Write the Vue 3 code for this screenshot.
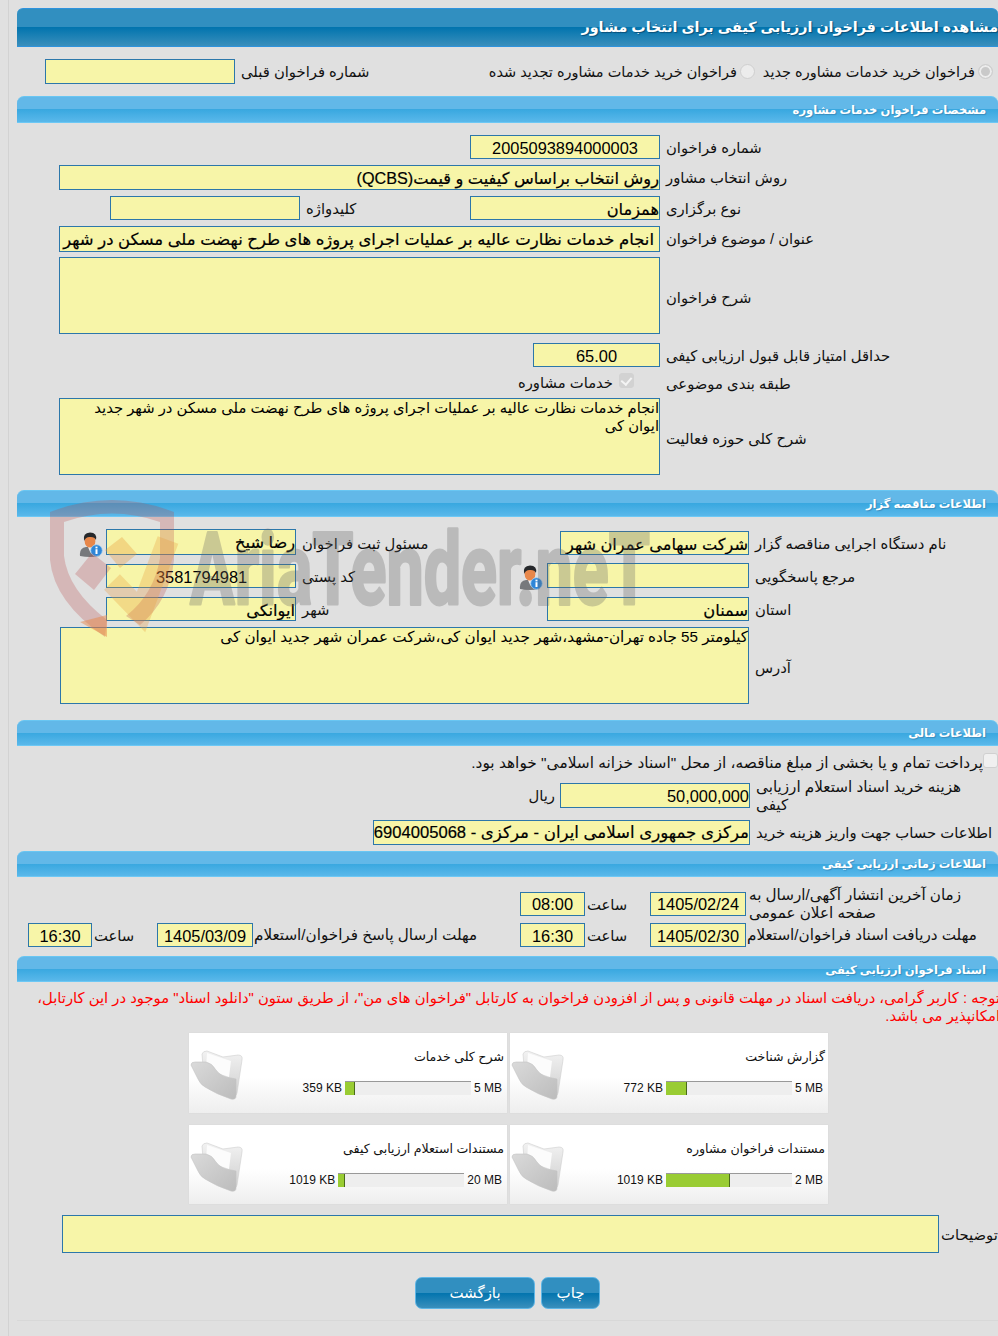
<script setup>
const cards = [
  { title: 'گزارش شناخت', max: '5 MB', used: '772 KB', pct: 17 },
  { title: 'شرح کلی خدمات', max: '5 MB', used: '359 KB', pct: 8 },
  { title: 'مستندات فراخوان مشاوره', max: '2 MB', used: '1019 KB', pct: 51 },
  { title: 'مستندات استعلام ارزیابی کیفی', max: '20 MB', used: '1019 KB', pct: 5 }
]
</script>

<template>
  <div class="page" dir="rtl">
    <h1 class="main-head">مشاهده اطلاعات فراخوان ارزیابی کیفی برای انتخاب مشاور</h1>

    <div class="row top-row">
      <label class="radio-item"><input type="radio" class="radio on" checked disabled />فراخوان خرید خدمات مشاوره جدید</label>
      <label class="radio-item second"><input type="radio" class="radio" disabled />فراخوان خرید خدمات مشاوره تجدید شده</label>
      <span class="lbl grow">شماره فراخوان قبلی</span>
      <div class="field w190"></div>
    </div>

    <h2 class="sec-head s2">مشخصات فراخوان خدمات مشاوره</h2>

    <div class="row h24 mt12">
      <span class="lbl l1">شماره فراخوان</span>
      <div class="field w190 num center">2005093894000003</div>
    </div>
    <div class="row h25 mt6">
      <span class="lbl l1">روش انتخاب مشاور</span>
      <div class="field w601 val">روش انتخاب براساس کیفیت و قیمت(QCBS)</div>
    </div>
    <div class="row h24 mt6">
      <span class="lbl l1">نوع برگزاری</span>
      <div class="field w190 val">همزمان</div>
      <span class="lbl keyword">کلیدواژه</span>
      <div class="field w190"></div>
    </div>
    <div class="row h26 mt6">
      <span class="lbl l1 up">عنوان / موضوع فراخوان</span>
      <div class="field w601 val subject">انجام خدمات نظارت عالیه بر عملیات اجرای پروژه های طرح نهضت ملی مسکن در شهر جدید ایوان کی</div>
    </div>
    <div class="row h77 mt5">
      <span class="lbl l1">شرح فراخوان</span>
      <div class="field w601"></div>
    </div>
    <div class="row h24 mt9">
      <span class="lbl l1">حداقل امتیاز قابل قبول ارزیابی کیفی</span>
      <div class="field w127 num center">65.00</div>
    </div>
    <div class="row h22 mt5">
      <span class="lbl l1">طبقه بندی موضوعی</span>
      <span class="topic"><input type="checkbox" class="check on" checked disabled />خدمات مشاوره</span>
    </div>
    <div class="row h77 mt4">
      <span class="lbl l1">شرح کلی حوزه فعالیت</span>
      <div class="field w601 area">انجام خدمات نظارت عالیه بر عملیات اجرای پروژه های طرح نهضت ملی مسکن در شهر جدید ایوان کی</div>
    </div>

    <h2 class="sec-head s3">اطلاعات مناقصه گزار</h2>

    <div class="row h26 mt12">
      <span class="lbl l2 down">نام دستگاه اجرایی مناقصه گزار</span>
      <div class="field w189 val low2">شرکت سهامی عمران شهر جدید ایوان کی</div>
      <span class="lbl grow down">مسئول ثبت فراخوان</span>
      <div class="field w190 val">رضا شیخ</div>
      <span class="slot">
        <svg class="person" viewBox="0 0 25 25"><use href="#person" /></svg>
      </span>
    </div>
    <div class="row h25 mt8">
      <span class="lbl l2 down">مرجع پاسخگویی</span>
      <div class="field w202"></div>
      <span class="slot near">
        <svg class="person" viewBox="0 0 25 25"><use href="#person" /></svg>
      </span>
      <span class="lbl grow down">کد پستی</span>
      <div class="field w190 num postal low1">3581794981</div>
      <span class="slot"></span>
    </div>
    <div class="row h24 mt9">
      <span class="lbl l2">استان</span>
      <div class="field w202 val">سمنان</div>
      <span class="slot near"></span>
      <span class="lbl grow">شهر</span>
      <div class="field w190 val">ایوانکی</div>
      <span class="slot"></span>
    </div>
    <div class="row h77 mt6">
      <span class="lbl l2">آدرس</span>
      <div class="field w689 area wide">کیلومتر 55 جاده تهران-مشهد،شهر جدید ایوان کی،شرکت عمران شهر جدید ایوان کی</div>
    </div>

    <h2 class="sec-head s4">اطلاعات مالی</h2>

    <div class="row mt6 pay">
      <input type="checkbox" class="check" disabled />
      <span>پرداخت تمام و یا بخشی از مبلغ مناقصه، از محل "اسناد خزانه اسلامی" خواهد بود.</span>
    </div>
    <div class="row h25 mt9">
      <span class="lbl l3 two-line">هزینه خرید اسناد استعلام ارزیابی<br />کیفی</span>
      <div class="field w190 num end">50,000,000</div>
      <span class="rial">ریال</span>
    </div>
    <div class="row h25 mt12">
      <span class="lbl l3">اطلاعات حساب جهت واریز هزینه خرید</span>
      <div class="field w377 val num-bold">مرکزی جمهوری اسلامی ایران - مرکزی - 6904005068</div>
    </div>

    <h2 class="sec-head s5">اطلاعات زمانی ارزیابی کیفی</h2>

    <div class="row h24 mt15 tight">
      <span class="lbl l4 two-line first">زمان آخرین انتشار آگهی/ارسال به<br />صفحه اعلان عمومی</span>
      <div class="field w96 num center">1405/02/24</div>
      <span class="lbl clock">ساعت</span>
      <div class="field w65 num center">08:00</div>
    </div>
    <div class="row h24 mt7">
      <span class="lbl l4 second-date">مهلت دریافت اسناد فراخوان/استعلام</span>
      <div class="field w96 num center">1405/02/30</div>
      <span class="lbl clock">ساعت</span>
      <div class="field w65 num center">16:30</div>
      <span class="lbl grow deadline">مهلت ارسال پاسخ فراخوان/استعلام</span>
      <div class="field w96 num center">1405/03/09</div>
      <span class="lbl clock">ساعت</span>
      <div class="field w64 num center last">16:30</div>
    </div>

    <h2 class="sec-head s6">اسناد فراخوان ارزیابی کیفی</h2>

    <p class="notice">توجه : کاربر گرامی، دریافت اسناد در مهلت قانونی و پس از افزودن فراخوان به کارتابل "فراخوان های من"، از طریق ستون "دانلود اسناد" موجود در این کارتابل، امکانپذیر می باشد.</p>

    <div class="cards">
      <div v-for="card in cards" :key="card.title" class="card">
        <div class="card-body">
          <div class="card-title">{{ card.title }}</div>
          <div class="progress">
            <span dir="ltr">{{ card.max }}</span>
            <div class="bar" dir="ltr"><div class="fill" :style="{ width: card.pct + '%' }"></div></div>
            <span dir="ltr">{{ card.used }}</span>
          </div>
        </div>
        <svg class="folder" viewBox="0 0 56 52">
          <defs>
            <linearGradient id="fb" x1="0" y1="0" x2="0" y2="1">
              <stop offset="0" stop-color="#f2f2f2" /><stop offset="1" stop-color="#cfcfcf" />
            </linearGradient>
            <linearGradient id="ff" x1="0" y1="0" x2="1" y2="1">
              <stop offset="0" stop-color="#dadada" /><stop offset="1" stop-color="#bcbcbc" />
            </linearGradient>
          </defs>
          <path d="M12 5 Q13 2 17 2 L33 8 L48 6 Q53 6 52 11 L47 44 Q46 48 42 47 L14 30 Z" fill="url(#fb)" stroke="#cfcfcf" stroke-width="0.6" />
          <path d="M17 4 L41 12 L39 28 L16 20 Z" fill="#fcfcfc" />
          <path d="M1 16 Q1 13 5 13 L16 13 Q22 14 26 21 Q31 28 41 29 L46 30 L46 47 Q46 51 41 50 Q26 45 15 38 Q10 35 8 30 Z" fill="url(#ff)" stroke="#c4c4c4" stroke-width="0.6" />
        </svg>
      </div>
    </div>

    <div class="row h38 notes">
      <span class="lbl grow note-label">توضیحات</span>
      <div class="field w877"></div>
    </div>

    <div class="actions">
      <button type="button" class="btn print">چاپ</button>
      <button type="button" class="btn back">بازگشت</button>
    </div>
    <div class="foot-line"></div>

    <svg class="defs" width="0" height="0">
      <symbol id="person" viewBox="0 0 25 25">
        <path d="M2 24 Q1 16 8 15 L16 15 Q22 16 22 24 Q12 26 2 24 Z" fill="#77797c" />
        <path d="M10 15 L14.5 15 L12.5 21 Z" fill="#eceff2" />
        <ellipse cx="12" cy="9" rx="5.4" ry="6.6" fill="#e8874a" />
        <path d="M6 9 Q4.5 0.8 12 0.5 Q19.5 0.8 18 8 Q16.5 4.6 12 5 Q8 4.6 6 9 Z" fill="#26282b" />
        <circle cx="18.5" cy="18.5" r="5.8" fill="#2e86d8" stroke="#a8d0f0" stroke-width="0.8" />
        <rect x="17.5" y="17.2" width="2" height="4.8" fill="#fff" />
        <rect x="17.5" y="14.6" width="2" height="1.8" fill="#fff" />
      </symbol>
    </svg>

    <svg class="watermark" viewBox="0 0 620 150" width="620" height="150">
      <path d="M4 14 Q66 -10 128 14 L128 62 Q124 102 94 127 L80 118 Q108 96 114 60 L114 24 Q66 7 18 24 L18 58 Q22 92 61 122 L59 139 Q8 104 4 62 Z" fill="#b84a4a" fill-opacity="0.27" />
      <path d="M29 76 L46 55 L65 70 L48 92 Z" fill="#b84a4a" fill-opacity="0.27" />
      <path d="M59 52 L76 39 L91 56 L74 70 Z" fill="#e89a3c" fill-opacity="0.34" />
      <polyline points="66,84 95,114 122,42" fill="none" stroke="#e89a3c" stroke-opacity="0.3" stroke-width="22" />
      <path d="M34 124 L61 117 L61 139 Z" fill="#e8874a" fill-opacity="0.5" />
      <text x="144" y="106" class="wm-text" textLength="460" lengthAdjust="spacingAndGlyphs">AriaTender.neT</text>
    </svg>
  </div>
</template>

<style>
html, body { margin: 0; background: #e0e0e0; }
</style>

<style scoped>
.page {
  position: relative;
  box-sizing: border-box;
  width: 998px;
  height: 1336px;
  overflow: hidden;
  padding: 8px 0 0 17px;
  background: #e0e0e0;
  font-family: "Liberation Sans", "DejaVu Sans", sans-serif;
  font-size: 14.8px;
  color: #111;
}
.page::before {
  content: "";
  position: absolute;
  left: 8px;
  top: 0;
  bottom: 0;
  width: 1px;
  background: #d2d2d2;
}

.main-head {
  margin: 0;
  box-sizing: border-box;
  height: 39px;
  line-height: 36px;
  border-top: 1px solid #2e93dd;
  border-bottom: 1px solid #2e93dd;
  border-radius: 6px 6px 0 0;
  background: linear-gradient(#318fc0 0, #318fc0 50%, #0274ae 50%, #3a8fbc 100%);
  color: #fff;
  font-size: 14.3px;
  font-weight: bold;
  white-space: nowrap;
  text-shadow: 1px 1px 1px #0a4f78;
}
.sec-head {
  margin: 0;
  box-sizing: border-box;
  height: 26px;
  padding-right: 12px;
  line-height: 25px;
  border-top: 1px solid #69c6f2;
  border-bottom: 1px solid #6cc8f5;
  border-radius: 7px 7px 0 0;
  background: linear-gradient(#62b8e8 0, #62b8e8 50%, #39a8e0 50%, #5ab8ea 100%);
  color: #fff;
  font-size: 11.5px;
  font-weight: bold;
  text-shadow: 1px 1px 1px #3a8cbc;
}
.s2 { margin-top: 12px; height: 27px; line-height: 26px; }
.s3 { margin-top: 15px; height: 27px; line-height: 27px; }
.s4 { margin-top: 16px; }
.s5 { margin-top: 6px; }
.s6 { margin-top: 9px; line-height: 26px; }

.row { display: flex; align-items: center; }
.h22 { height: 22px; }
.h24 { height: 24px; }
.h25 { height: 25px; }
.h26 { height: 26px; }
.h38 { height: 38px; }
.h77 { height: 77px; }
.h77 > .lbl { margin-top: 4px; }
.mt4 { margin-top: 4px; }
.mt5 { margin-top: 5px; }
.mt6 { margin-top: 6px; }
.mt7 { margin-top: 7px; }
.mt8 { margin-top: 8px; }
.mt9 { margin-top: 9px; }
.mt12 { margin-top: 12px; }
.mt15 { margin-top: 15px; }

.field {
  box-sizing: border-box;
  height: 100%;
  flex: none;
  overflow: hidden;
  white-space: nowrap;
  background: #f7f5a8;
  border: 1px solid #2c77aa;
  color: #000;
}
.w64 { width: 64px; }
.w65 { width: 65px; }
.w96 { width: 96px; }
.w127 { width: 127px; }
.w189 { width: 189px; }
.w190 { width: 190px; }
.w202 { width: 202px; }
.w377 { width: 377px; }
.w601 { width: 601px; }
.w689 { width: 689px; }
.w877 { width: 877px; }

.val { font-size: 16.2px; line-height: 24px; -webkit-text-stroke: 0.2px #000; }
.num { font-size: 16.4px; line-height: 24px; }
.tight .num { line-height: 23px; }
.center { text-align: center; }
.end { direction: ltr; text-align: right; }
.postal { padding: 0 49px; direction: ltr; text-align: center; }
.subject { padding-right: 5px; font-size: 16.45px; }
.num-bold { font-size: 16.6px; }
.area { font-size: 14.8px; line-height: 18px; white-space: normal; }
.wide { font-size: 15.2px; }
.low1 { height: 24px; margin-top: 1px; }
.low2 { height: 24px; margin-top: 2px; }
.last { margin-left: 11px; }

.lbl { flex: none; text-align: left; white-space: nowrap; }
.down { margin-top: 2px; }
.up { margin-bottom: 2px; }
.l1 { width: 332px; margin-left: 6px; }
.l2 { width: 243px; margin-left: 6px; }
.l3 { width: 242px; margin-left: 6px; }
.l4 { width: 252px; font-size: 15.2px; }
.first { padding-left: 3px; box-sizing: border-box; }
.second-date { padding-left: 1px; box-sizing: border-box; }
.clock { width: 63px; margin-left: 2px; box-sizing: border-box; }
.grow { flex: 1 1 0; min-width: 0; margin-left: 6px; }
.deadline { margin-left: 1px; font-size: 15.2px; }
.keyword { width: 158px; margin-left: 6px; margin-right: 6px; }
.two-line { line-height: 18px; align-self: center; font-size: 15.2px; }
.rial { margin-right: 5px; }

.slot { flex: none; display: flex; width: 28px; margin-left: 61px; }
.slot .person { margin-right: 3px; }
.near { margin-left: 0; margin-right: 4px; width: 25px; }
.near .person { margin-right: 0; }
.person { display: block; flex: none; width: 25px; height: 25px; transform: translateY(2px); }
.defs { position: absolute; }

.top-row { height: 25px; margin-top: 12px; padding-left: 28px; }
.radio-item { display: flex; align-items: center; margin-right: 5px; white-space: nowrap; font-size: 14.5px; }
.second { margin-right: 8px; }

.radio,
.check {
  appearance: none;
  flex: none;
  margin: 0 0 0 3px;
  box-sizing: border-box;
  width: 15px;
  height: 15px;
  position: relative;
}
.radio { border-radius: 50%; border: 1px solid #cfcfcf; background: #ececec; }
.radio.on { background: #c9c9c9; box-shadow: inset 0 0 0 2px #ececec; }
.check { border-radius: 3px; border: 1px solid #d0d0d0; background: #f0f0f0; }
.check.on { background: #d2d2d2; border-color: #d2d2d2; }
.check.on::before {
  content: "";
  position: absolute;
  left: 3px;
  top: 1px;
  width: 5px;
  height: 8px;
  border: solid #f4f4f4;
  border-width: 0 2px 2px 0;
  transform: rotate(40deg);
}
.topic { display: flex; align-items: center; margin-right: 26px; white-space: nowrap; line-height: 24px; }
.topic .check { margin: -6px 0 0 6px; }

.pay { height: 22px; font-size: 15.4px; white-space: nowrap; }
.pay .check { margin: -6px 0 0 0; }

.notice {
  margin: 7px -2px 0 0;
  color: #f00;
  font-size: 14.8px;
  line-height: 18px;
}

.cards {
  display: grid;
  grid-template-columns: 318px 318px;
  grid-template-rows: 80px 79px;
  gap: 12px 3px;
  margin: 8px 170px 0 0;
}
.card {
  display: flex;
  background: linear-gradient(#fff 0, #fff 55%, #eeeeee 100%);
  box-shadow: 0 0 1px #cfcfcf;
}
.card-body { flex: 1 1 0; min-width: 0; padding: 15px 3px 0 5px; }
.card-title { height: 18px; line-height: 18px; font-size: 12.6px; white-space: nowrap; }
.progress {
  display: flex;
  align-items: center;
  gap: 3px;
  margin-top: 15px;
  font-size: 12px;
  padding-right: 2px;
}
.bar {
  flex: none;
  box-sizing: border-box;
  width: 126px;
  height: 14px;
  border-top: 1px solid #999;
  background: #eee;
}
.fill { height: 100%; box-sizing: border-box; background: #99cc33; border-right: 1px solid #4a6a1a; }
.folder { flex: none; width: 56px; height: 52px; margin: 16px 0 0 1px; }

.notes { margin-top: 11px; padding-left: 45px; }
.note-label { margin-left: 2px; }

.actions { display: flex; gap: 6px; margin: 24px 398px 0 0; }
.btn {
  box-sizing: border-box;
  height: 32px;
  padding: 0;
  border: 1px solid #5fb6e6;
  border-radius: 7px;
  background: linear-gradient(#318fc0 0, #318fc0 50%, #0274ae 50%, #3a8fbc 100%);
  color: #fff;
  font-family: inherit;
  font-size: 15px;
}
.print { width: 59px; }
.back { width: 120px; }
.foot-line { margin-top: 11px; height: 1px; background: #d8d8d8; }

.watermark {
  position: absolute;
  left: 46px;
  top: 498px;
  overflow: visible;
  pointer-events: none;
  direction: ltr;
}
.wm-text {
  direction: ltr;
  font-family: Roboto, "Liberation Sans", sans-serif;
  font-weight: bold;
  font-size: 100px;
  fill: #666;
  stroke: #666;
  stroke-width: 3px;
  stroke-linejoin: round;
  opacity: 0.3;
}
</style>
